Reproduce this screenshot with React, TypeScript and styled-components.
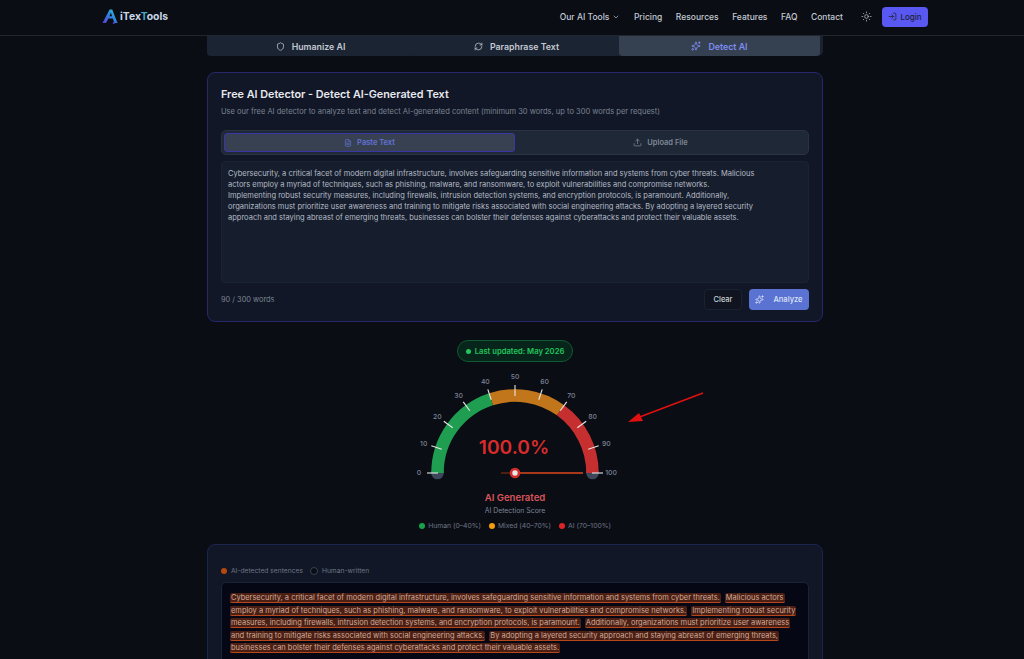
import React from "react";
import styled, { createGlobalStyle } from "styled-components";
import { ChevronDown, FileText, LogIn, RefreshCw, Shield, Sparkles, Sun, Upload } from "lucide-react";

const GlobalStyle = createGlobalStyle`
  html, body {
    margin: 0;
    height: 100%;
    overflow: hidden;
    background: #0a0d14;
    font-family: Inter, "Liberation Sans", sans-serif;
  }
`;

const NAV_LINKS = ["Pricing", "Resources", "Features", "FAQ", "Contact"];

const SENTENCES = [
  "Cybersecurity, a critical facet of modern digital infrastructure, involves safeguarding sensitive information and systems from cyber threats.",
  "Malicious actors employ a myriad of techniques, such as phishing, malware, and ransomware, to exploit vulnerabilities and compromise networks.",
  "Implementing robust security measures, including firewalls, intrusion detection systems, and encryption protocols, is paramount.",
  "Additionally, organizations must prioritize user awareness and training to mitigate risks associated with social engineering attacks.",
  "By adopting a layered security approach and staying abreast of emerging threats, businesses can bolster their defenses against cyberattacks and protect their valuable assets.",
];

const CX = 210;
const CY = 109;

// angle for a gauge value, 0 = left end, 100 = right end
const polar = (value: number, r: number) => {
  const a = Math.PI - (value / 100) * Math.PI;
  return { x: CX + r * Math.cos(a), y: CY - r * Math.sin(a) };
};

const arc = (from: number, to: number, r: number) => {
  const a = polar(from, r);
  const b = polar(to, r);
  return `M ${a.x} ${a.y} A ${r} ${r} 0 0 1 ${b.x} ${b.y}`;
};

const Page = styled.div`
  height: 659px;
  display: flex;
  flex-direction: column;
  overflow: hidden;
`;

const Header = styled.header`
  height: 35px;
  flex: none;
  display: flex;
  align-items: center;
  padding: 0 96px 0 102px;
  border-bottom: 1px solid #22262e;
  background: #0a0d14;
`;

const HeaderRow = styled.div`
  display: flex;
  align-items: center;
  justify-content: space-between;
  width: 100%;
  margin-bottom: 2px;
`;

const Brand = styled.div`
  display: flex;
  align-items: center;
  gap: 1px;
  font-size: 10.4px;
  font-weight: 700;
  color: #c9d6e6;
`;

const BrandAccent = styled.span`
  color: #3fa9c9;
`;

const BrandName = styled.span`
  display: block;
`;

const Nav = styled.nav`
  display: flex;
  align-items: center;
  gap: 13.5px;
`;

const NavLink = styled.a`
  display: flex;
  align-items: center;
  gap: 3px;
  font-size: 8.5px;
  font-weight: 500;
  color: #c3c9d3;
`;

const ThemeToggle = styled.span`
  display: flex;
  color: #c3c9d3;
  margin: 0 -3px 0 4px;
`;

const LoginButton = styled.button`
  display: flex;
  align-items: center;
  gap: 3px;
  width: 46px;
  height: 20px;
  justify-content: center;
  padding: 0;
  border: 0;
  border-radius: 4px;
  background: #5a58f2;
  color: #1b2233;
  font: 500 8px Inter, sans-serif;
`;

const Main = styled.main`
  flex: 1;
  min-height: 0;
  overflow: hidden;
  width: 616px;
  margin-left: 207px;
  display: flex;
  flex-direction: column;
  align-items: stretch;
`;

const ToolTabs = styled.div`
  flex: none;
  display: grid;
  grid-template-columns: 207px 205px 1fr;
  height: 20px;
  padding-right: 3px;
  box-sizing: border-box;
  background: #1a2230;
  border-radius: 0 0 5px 5px;
`;

const ToolTab = styled.div<{ $active?: boolean }>`
  display: flex;
  align-items: center;
  justify-content: center;
  gap: 7px;
  border-radius: 0 0 4px 4px;
  background: ${(p) => (p.$active ? "#354051" : "#1b2432")};
  color: ${(p) => (p.$active ? "#7f8cf0" : "#c3c9d3")};
  font-size: 8.8px;
  font-weight: 600;
`;

const Card = styled.section`
  flex: none;
  margin-top: 16px;
  height: 250px;
  box-sizing: border-box;
  padding: 13px 13px 11px;
  display: flex;
  flex-direction: column;
  background: #111726;
  border: 1px solid #26286a;
  border-radius: 8px;
`;

const Title = styled.h1`
  margin: 1px 0 0;
  font-size: 10.8px;
  line-height: 16px;
  font-weight: 600;
  color: #e7e9ee;
`;

const Subtitle = styled.p`
  margin: 3px 0 0;
  font-size: 7.54px;
  line-height: 11px;
  color: #7c8494;
`;

const ModeTabs = styled.div`
  flex: none;
  display: grid;
  grid-template-columns: 1fr 1fr;
  height: 25px;
  margin-top: 13px;
  padding: 2px;
  box-sizing: border-box;
  background: #1f2836;
  border: 1px solid #2a3341;
  border-radius: 5px;
`;

const ModeTab = styled.div<{ $active?: boolean }>`
  display: flex;
  align-items: center;
  justify-content: center;
  gap: 5px;
  border-radius: 3px;
  border: 1px solid ${(p) => (p.$active ? "#3a36a8" : "transparent")};
  background: ${(p) => (p.$active ? "#374151" : "transparent")};
  color: ${(p) => (p.$active ? "#6472d8" : "#7f8796")};
  font-size: 7.5px;
  font-weight: 600;
`;

const TextBox = styled.div`
  flex: none;
  height: 122px;
  margin-top: 6px;
  padding: 6px 6px;
  box-sizing: border-box;
  background: #161e2d;
  border: 1px solid #1a2333;
  border-radius: 4px;
  color: #b5bbc6;
  font-size: 7.5px;
  line-height: 11px;
`;

const TextBoxInner = styled.div`
  width: 528px;
`;

const CardFooter = styled.div`
  flex: none;
  display: flex;
  align-items: center;
  margin-top: 6px;
  height: 21px;
`;

const WordCount = styled.span`
  margin-right: auto;
  font-size: 7.4px;
  color: #7c8494;
`;

const ClearButton = styled.button`
  width: 38px;
  height: 21px;
  padding: 0;
  border: 1px solid #1a2130;
  border-radius: 4px;
  background: #0f1420;
  color: #d0d4db;
  font: 500 7.4px Inter, sans-serif;
`;

const AnalyzeButton = styled.button`
  display: flex;
  align-items: center;
  justify-content: center;
  gap: 9px;
  width: 60px;
  height: 21px;
  margin-left: 7px;
  padding: 0;
  border: 0;
  border-radius: 4px;
  background: #5a72d2;
  color: #dfe4f5;
  font: 500 7.6px Inter, sans-serif;
`;

const Result = styled.section`
  flex: none;
  display: flex;
  flex-direction: column;
  align-items: center;
  margin-top: 18px;
`;

const Updated = styled.div`
  display: flex;
  align-items: center;
  gap: 4px;
  height: 22px;
  box-sizing: border-box;
  padding: 0 8px;
  border: 1px solid #0f5a30;
  border-radius: 11px;
  background: #07251a;
  color: #22c55e;
  font-size: 7.65px;
  font-weight: 600;
`;

const UpdatedDot = styled.i`
  width: 5px;
  height: 5px;
  border-radius: 50%;
  background: #22c55e;
`;

const GaugeSvg = styled.svg`
  display: block;
  width: 420px;
  height: 124px;
  margin-top: 2px;
`;

const GaugeLabel = styled.text`
  font: 500 6.8px Inter, sans-serif;
  fill: #7c8494;
`;

const GaugeValue = styled.text`
  font: 600 19.2px Inter, sans-serif;
  fill: #d92b2b;
`;

const Verdict = styled.div`
  margin-top: 4px;
  font-size: 9.6px;
  line-height: 12px;
  font-weight: 600;
  color: #d9545a;
`;

const VerdictNote = styled.div`
  margin-top: 2px;
  font-size: 6.9px;
  line-height: 10px;
  color: #7c8494;
`;

const Legend = styled.div`
  display: flex;
  gap: 8px;
  margin-top: 5px;
  font-size: 6.8px;
  line-height: 10px;
  color: #6f7686;
`;

const LegendItem = styled.span`
  display: flex;
  align-items: center;
  gap: 3px;
`;

const Dot = styled.i<{ $color: string; $ring?: string }>`
  width: 6px;
  height: 6px;
  border-radius: 50%;
  background: ${(p) => p.$color};
  border: ${(p) => (p.$ring ? `1px solid ${p.$ring}` : "0")};
`;

const HighlightCard = styled.section`
  flex: none;
  margin-top: 13px;
  height: 200px;
  box-sizing: border-box;
  padding: 21px 13px 0;
  background: #111726;
  border: 1px solid #1c2450;
  border-radius: 8px;
`;

const HighlightLegend = styled.div`
  display: flex;
  gap: 7px;
  font-size: 6.7px;
  line-height: 10px;
  color: #6f7686;
`;

const HighlightItem = styled.span`
  display: flex;
  align-items: center;
  gap: 4px;
`;

const HighlightPanel = styled.div`
  margin-top: 6px;
  height: 120px;
  padding: 9px 8px;
  box-sizing: border-box;
  background: #050814;
  border: 1px solid #1c2433;
  border-radius: 5px;
  color: #d0ab98;
  font-size: 7.47px;
  line-height: 12.5px;
`;

const Sentence = styled.span`
  margin-right: 2px;
  padding: 0 1px;
  border-radius: 2px;
  background: #4b1f14;
  border-bottom: 1px solid #b5481a;
  box-decoration-break: clone;
  -webkit-box-decoration-break: clone;
`;

const Logo = () => (
  <svg width="17" height="17" viewBox="0 0 17 17">
    <defs>
      <linearGradient id="logoA" x1="0" y1="1" x2="1" y2="0">
        <stop offset="0" stopColor="#5a3fd8" />
        <stop offset="0.5" stopColor="#2f7fe0" />
        <stop offset="1" stopColor="#2fd0c4" />
      </linearGradient>
    </defs>
    <path d="M0.5 15 L7.6 1.5 L10.2 1.5 L15.5 15 L12.4 15 L10.8 10.5 L6.4 10.5 L4 15 Z M7.5 8.2 L10 8.2 L8.9 4.6 Z" fill="url(#logoA)" fillRule="evenodd" />
    <circle cx="11.8" cy="15" r="1.1" fill="#5a3fd8" />
  </svg>
);

const Gauge = () => (
  <GaugeSvg viewBox="0 0 420 124">
    <circle cx={polar(0, 77.5).x} cy={polar(0, 77.5).y} r="6.3" fill="#3c4759" />
    <circle cx={polar(100, 77.5).x} cy={polar(100, 77.5).y} r="6.3" fill="#3c4759" />
    <path d={arc(0, 40, 77.5)} stroke="#1f9d50" strokeWidth="12.5" fill="none" />
    <path d={arc(40, 70, 77.5)} stroke="#c2761c" strokeWidth="12.5" fill="none" />
    <path d={arc(70, 100, 77.5)} stroke="#c62f2f" strokeWidth="12.5" fill="none" />
    {Array.from({ length: 11 }, (_, i) => {
      const v = i * 10;
      const a = polar(v, 77);
      const b = polar(v, 88);
      const l = polar(v, 96);
      return (
        <g key={v}>
          <line x1={a.x} y1={a.y} x2={b.x} y2={b.y} stroke="#e8e8e8" strokeWidth="1.1" />
          <GaugeLabel x={l.x} y={l.y + 2.4} textAnchor="middle">
            {v}
          </GaugeLabel>
        </g>
      );
    })}
    <GaugeValue x={CX - 1} y={CY - 19} textAnchor="middle">
      100.0%
    </GaugeValue>
    <line x1={CX - 14} y1={CY} x2={CX} y2={CY} stroke="#7c2a14" strokeWidth="1.2" />
    <line x1={CX} y1={CY} x2={CX + 68} y2={CY} stroke="#a8381a" strokeWidth="1.8" />
    <circle cx={CX} cy={CY} r="4" fill="#e8e8e8" stroke="#d02c2c" strokeWidth="2.6" />
    {/* red arrow drawn over the screenshot */}
    <line x1="398" y1="29" x2="332" y2="54" stroke="#e01010" strokeWidth="1.6" />
    <path d="M323 58 L334 49 L338 57 Z" fill="#e01010" />
  </GaugeSvg>
);

export default function App() {
  return (
    <Page>
      <GlobalStyle />
      <Header>
        <HeaderRow>
          <Brand>
            <Logo />
            <BrandName>
              iTex<BrandAccent>T</BrandAccent>ools
            </BrandName>
          </Brand>
          <Nav>
            <NavLink>
              Our AI Tools <ChevronDown size={8} />
            </NavLink>
            {NAV_LINKS.map((link) => (
              <NavLink key={link}>{link}</NavLink>
            ))}
            <ThemeToggle>
              <Sun size={11} strokeWidth={1.5} />
            </ThemeToggle>
            <LoginButton>
              <LogIn size={9} /> Login
            </LoginButton>
          </Nav>
        </HeaderRow>
      </Header>
      <Main>
        <ToolTabs>
          <ToolTab>
            <Shield size={9} /> Humanize AI
          </ToolTab>
          <ToolTab>
            <RefreshCw size={9} /> Paraphrase Text
          </ToolTab>
          <ToolTab $active>
            <Sparkles size={10} /> Detect AI
          </ToolTab>
        </ToolTabs>
        <Card>
          <Title>Free AI Detector - Detect AI-Generated Text</Title>
          <Subtitle>
            Use our free AI detector to analyze text and detect AI-generated content (minimum 30 words, up to 300 words
            per request)
          </Subtitle>
          <ModeTabs>
            <ModeTab $active>
              <FileText size={8} /> Paste Text
            </ModeTab>
            <ModeTab>
              <Upload size={9} /> Upload File
            </ModeTab>
          </ModeTabs>
          <TextBox>
            <TextBoxInner>{SENTENCES.join(" ")}</TextBoxInner>
          </TextBox>
          <CardFooter>
            <WordCount>90 / 300 words</WordCount>
            <ClearButton>Clear</ClearButton>
            <AnalyzeButton>
              <Sparkles size={9} /> Analyze
            </AnalyzeButton>
          </CardFooter>
        </Card>
        <Result>
          <Updated>
            <UpdatedDot /> Last updated: May 2026
          </Updated>
          <Gauge />
          <Verdict>AI Generated</Verdict>
          <VerdictNote>AI Detection Score</VerdictNote>
          <Legend>
            <LegendItem>
              <Dot $color="#16a34a" /> Human (0–40%)
            </LegendItem>
            <LegendItem>
              <Dot $color="#f59e0b" /> Mixed (40–70%)
            </LegendItem>
            <LegendItem>
              <Dot $color="#dc2626" /> AI (70–100%)
            </LegendItem>
          </Legend>
        </Result>
        <HighlightCard>
          <HighlightLegend>
            <HighlightItem>
              <Dot $color="#b5480f" /> AI-detected sentences
            </HighlightItem>
            <HighlightItem>
              <Dot $color="#0a0d14" $ring="#3a4252" /> Human-written
            </HighlightItem>
          </HighlightLegend>
          <HighlightPanel>
            {SENTENCES.map((s) => (
              <React.Fragment key={s}>
                <Sentence>{s}</Sentence>{" "}
              </React.Fragment>
            ))}
          </HighlightPanel>
        </HighlightCard>
      </Main>
    </Page>
  );
}
